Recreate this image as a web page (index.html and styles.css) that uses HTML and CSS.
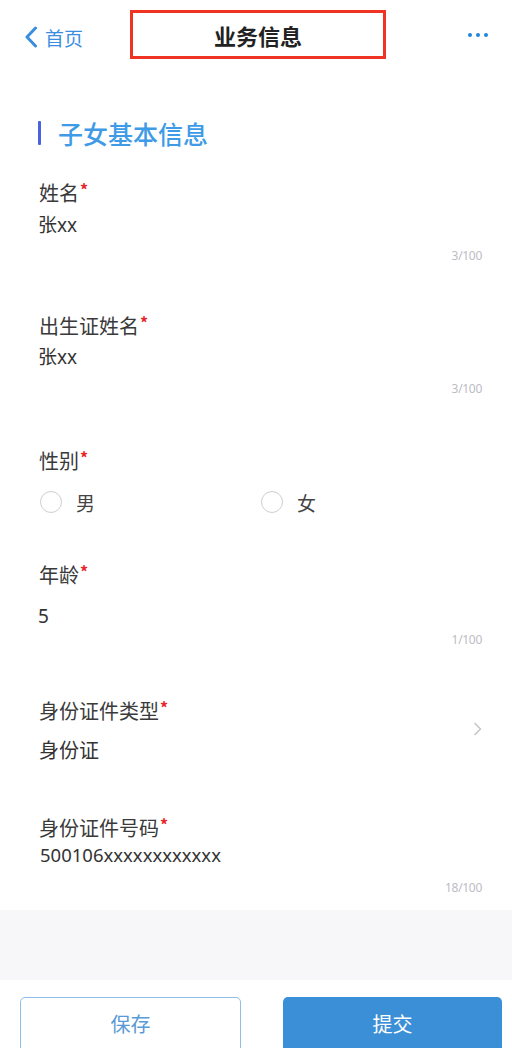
FILE: index.html
```html
<!DOCTYPE html>
<html lang="zh">
<head>
<meta charset="utf-8">
<link rel="stylesheet" href="styles.css">
</head>
<body>
<div class="page">
  <header class="nav">
    <div class="back">
      <svg class="back-icon" width="14" height="22" viewBox="0 0 14 22"><path d="M11.5 2 L3 11 L11.5 20" fill="none" stroke="#3a8ee0" stroke-width="3" stroke-linecap="round" stroke-linejoin="round"/></svg>
      <span>首页</span>
    </div>
    <div class="title">业务信息</div>
    <div class="more"><i></i><i></i><i></i></div>
  </header>

  <main class="form">
    <h2 class="section"><span class="bar"></span>子女基本信息</h2>

    <div class="field f1">
      <div class="label">姓名<b>*</b></div>
      <div class="value">张xx</div>
      <div class="count">3/100</div>
    </div>

    <div class="field f2">
      <div class="label">出生证姓名<b>*</b></div>
      <div class="value">张xx</div>
      <div class="count">3/100</div>
    </div>

    <div class="field f3">
      <div class="label">性别<b>*</b></div>
      <div class="radios">
        <label class="radio"><span class="circle"></span>男</label>
        <label class="radio"><span class="circle"></span>女</label>
      </div>
    </div>

    <div class="field f4">
      <div class="label">年龄<b>*</b></div>
      <div class="value">5</div>
      <div class="count">1/100</div>
    </div>

    <div class="field f5">
      <div class="select-main">
        <div class="label">身份证件类型<b>*</b></div>
        <div class="value">身份证</div>
      </div>
      <svg class="arrow" width="10" height="14" viewBox="0 0 10 14"><path d="M2 1.5 L7.5 7 L2 12.5" fill="none" stroke="#c5c5cc" stroke-width="1.6" stroke-linecap="round" stroke-linejoin="round"/></svg>
    </div>

    <div class="field f6">
      <div class="label">身份证件号码<b>*</b></div>
      <div class="value">500106xxxxxxxxxxxx</div>
      <div class="count">18/100</div>
    </div>
  </main>

  <div class="gap-band"></div>

  <footer class="actions">
    <button class="btn save">保存</button>
    <button class="btn submit">提交</button>
  </footer>
</div>
</body>
</html>
```

FILE: styles.css
```css
html, body {
  margin: 0;
  padding: 0;
  background: #ffffff;
}
body {
  width: 512px;
  height: 1048px;
  overflow: hidden;
  font-family: "Noto Sans", "Noto Sans CJK SC", sans-serif;
  color: #333;
}
.page {
  display: flex;
  flex-direction: column;
}
.nav {
  height: 72px;
  display: flex;
  align-items: center;
  position: relative;
  padding: 0 0 0 24px;
  box-sizing: border-box;
}
.back {
  display: flex;
  align-items: center;
  gap: 7px;
  color: #3a8ee0;
  font-size: 19px;
  font-family: "Noto Sans CJK SC", sans-serif;
  width: 106px;
  margin-top: 2px;
}
.back-icon { display: block; }
.title {
  width: 250px;
  height: 43px;
  border: 3px solid #ef3424;
  display: flex;
  align-items: center;
  justify-content: center;
  font-family: "Noto Sans CJK SC", sans-serif;
  font-weight: 700;
  font-size: 22px;
  color: #222;
  margin-top: -3px;
}
.more {
  display: flex;
  gap: 4px;
  margin-left: auto;
  margin-right: 24px;
  margin-top: -3px;
}
.more i {
  width: 4px;
  height: 4px;
  border-radius: 50%;
  background: #1f86d8;
}
.form {
  padding: 0 30px 15px 38px;
}
.section {
  margin: 45px 0 5px 0;
  display: flex;
  align-items: center;
  height: 32px;
  font-family: "Noto Sans CJK SC", sans-serif;
  font-size: 25px;
  font-weight: 500;
  color: #3f9be6;
}
.bar {
  width: 3px;
  height: 24px;
  background: #4a62e2;
  border-radius: 1px;
  margin-right: 17px;
}
.label {
  font-family: "Noto Sans CJK SC", sans-serif;
  font-size: 20px;
  line-height: 24px;
  height: 24px;
  color: #3a3a3a;
  margin-left: 1px;
}
.label b {
  color: #e8262a;
  font-weight: 700;
  font-size: 16px;
  vertical-align: 5px;
  margin-left: 1px;
}
.value {
  font-family: "Noto Sans", "Noto Sans CJK SC", sans-serif;
  font-size: 19px;
  line-height: 24px;
  height: 24px;
  color: #333;
  margin-left: 0;
}
.count {
  text-align: right;
  font-family: "Noto Sans", sans-serif;
  font-size: 12px;
  line-height: 14px;
  color: #bcbcc4;
  letter-spacing: -0.3px;
}
.field { display: flex; flex-direction: column; }
.f1 { padding-top: 23px; padding-bottom: 24px; }
.f1 .value { margin-top: 12px; }
.f1 .count { margin-top: 12px; }
.f2 { padding-top: 23px; padding-bottom: 24px; }
.f2 .value { margin-top: 11px; }
.f2 .count { margin-top: 13px; }
.f3 { padding-top: 25px; padding-bottom: 22px; }
.radios {
  margin-top: 22px;
  display: grid;
  grid-template-columns: 221px 1fr;
}
.radio {
  display: flex;
  align-items: center;
  gap: 14px;
  font-family: "Noto Sans CJK SC", sans-serif;
  font-size: 19px;
  color: #444;
  height: 22px;
  margin-left: 2px;
}
.circle {
  width: 22px;
  height: 22px;
  box-sizing: border-box;
  border: 1.5px solid #cfcfd4;
  border-radius: 50%;
}
.f4 { padding-top: 24px; padding-bottom: 24px; }
.f4 .value { margin-top: 21px; }
.f4 .count { margin-top: 5px; }
.f5 {
  flex-direction: row;
  align-items: center;
  justify-content: space-between;
  padding-top: 24px;
  padding-bottom: 24px;
}
.f5 .value { margin-top: 20px; font-size: 20px; margin-left: 1px; }
.arrow { margin-right: -1px; margin-top: 0px; }
.f6 { padding-top: 25px; }
.f6 .value { margin-top: 7px; margin-left: 2px; font-size: 18.5px; }
.f6 .count { margin-top: 14px; }
.gap-band {
  height: 70px;
  background: #f7f7f9;
}
.actions {
  display: flex;
  gap: 42px;
  padding: 17px 10px 0 20px;
}
.btn {
  flex: 1;
  height: 60px;
  border-radius: 5px;
  font-family: "Noto Sans CJK SC", sans-serif;
  font-size: 20px;
  padding: 0 0 8px 0;
  box-sizing: border-box;
}
.save {
  background: #fff;
  border: 1.5px solid #8fbfe8;
  color: #5a9ad6;
}
.submit {
  background: #3b8fd6;
  border: none;
  color: #fff;
}
```
